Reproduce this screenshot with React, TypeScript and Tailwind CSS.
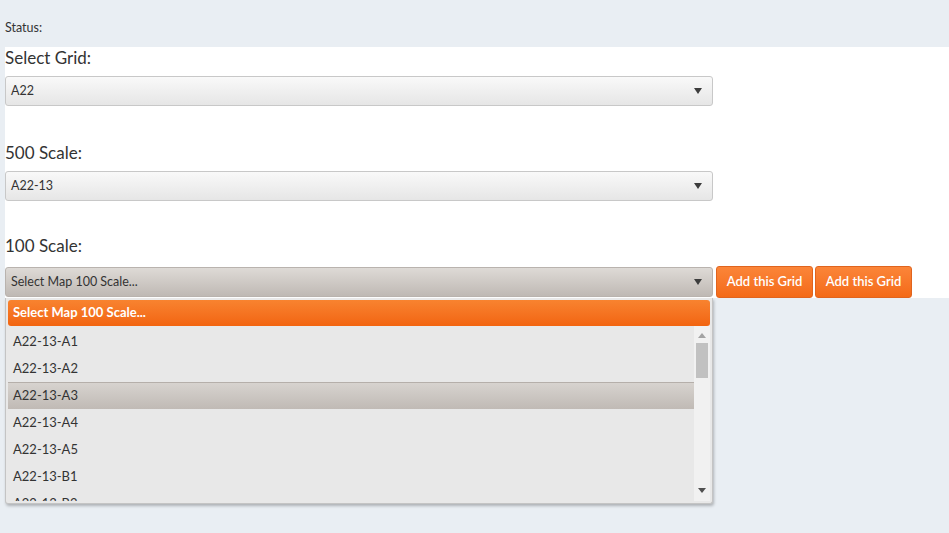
import React from 'react';

const options = [
    'A22-13-A1',
    'A22-13-A2',
    'A22-13-A3',
    'A22-13-A4',
    'A22-13-A5',
    'A22-13-B1',
    'A22-13-B2',
];

function Caret() {
    return (
        <svg width="8" height="6" viewBox="0 0 8 6" className="shrink-0">
            <path d="M0 0H8L4 6Z" fill="#3d3d3d" />
        </svg>
    );
}

function SelectBox({ value, dark }: { value: string; dark?: boolean }) {
    return (
        <div
            className={
                dark
                    ? 'flex h-[30px] w-[708px] items-center justify-between rounded-[3px] border border-[#b9b3ae] bg-gradient-to-b from-[#dedad6] to-[#bfb9b4] pl-[5px] pr-[10px] text-[12.5px] text-[#333]'
                    : 'flex h-[30px] w-[708px] items-center justify-between rounded-[3px] border border-[#c8c8c8] bg-gradient-to-b from-[#f9f9f9] to-[#e6e6e6] pl-[5px] pr-[10px] text-[12.5px] text-[#333]'
            }
        >
            <span>{value}</span>
            <Caret />
        </div>
    );
}

function AddButton() {
    return (
        <button className="h-[32px] w-[97px] rounded-[3px] border border-[#e0641e] bg-gradient-to-b from-[#fb8538] to-[#f46a16] text-[13px] font-semibold text-white">
            Add this Grid
        </button>
    );
}

export default function App() {
    return (
        <div className="relative h-[533px] w-full bg-[#e9eef3] font-['Lato','Open_Sans',sans-serif] text-[#333]">
            <div className="h-[47px] px-[5px] pt-[19px] text-[12.5px] text-[#333]">
                Status:
            </div>
            <div className="ml-[5px] h-[251px] bg-white">
                <div className="h-[29px] text-[17px] leading-[21px]">Select Grid:</div>
                <SelectBox value="A22" />
                <div className="mt-[35px] h-[30px] text-[17px] leading-[24px]">500 Scale:</div>
                <SelectBox value="A22-13" />
                <div className="mt-[35px] h-[30px] text-[17px] leading-[20px]">100 Scale:</div>
                <div className="flex items-start gap-[2px]">
                    <div className="mt-[1px] mr-[1px]">
                        <SelectBox value="Select Map 100 Scale..." dark />
                    </div>
                    <AddButton />
                    <AddButton />
                </div>
            </div>

            {/* open dropdown of the 100 scale select */}
            <div className="absolute left-[5px] top-[298px] h-[206px] w-[708px] rounded-b-[3px] border border-t-0 border-[#c4c4c4] bg-[#e8e8e8] shadow-[1px_2px_3px_rgba(0,0,0,0.25)]">
                <div className="mx-[2px] mt-[2px] flex h-[26px] items-center rounded-[3px] bg-gradient-to-b from-[#f8832f] to-[#f2640f] pl-[5px] text-[13px] font-bold text-white">
                    Select Map 100 Scale...
                </div>
                <div className="flex h-[175px] overflow-hidden">
                    <div className="flex-1 pl-[2px] pt-[2px]">
                        {options.map((o) => (
                            <div
                                key={o}
                                className={
                                    o === 'A22-13-A3'
                                        ? 'flex h-[27px] items-center border-t border-[#b5afaa] bg-gradient-to-b from-[#d7d3cf] to-[#c0bab5] pl-[5px] text-[13px] text-[#333]'
                                        : 'flex h-[27px] items-center pl-[5px] text-[13px] text-[#333]'
                                }
                            >
                                {o}
                            </div>
                        ))}
                    </div>
                    <div className="relative mr-[2px] w-[16px] bg-[#f1f1f1]">
                        <svg width="8" height="5" viewBox="0 0 8 5" className="absolute left-[4px] top-[7px]">
                            <path d="M0 5H8L4 0Z" fill="#a3a3a3" />
                        </svg>
                        <div className="absolute left-[2px] top-[17px] h-[35px] w-[12px] bg-[#c1c1c1]" />
                        <svg width="8" height="5" viewBox="0 0 8 5" className="absolute bottom-[8px] left-[4px]">
                            <path d="M0 0H8L4 5Z" fill="#505050" />
                        </svg>
                    </div>
                </div>
            </div>
        </div>
    );
}
